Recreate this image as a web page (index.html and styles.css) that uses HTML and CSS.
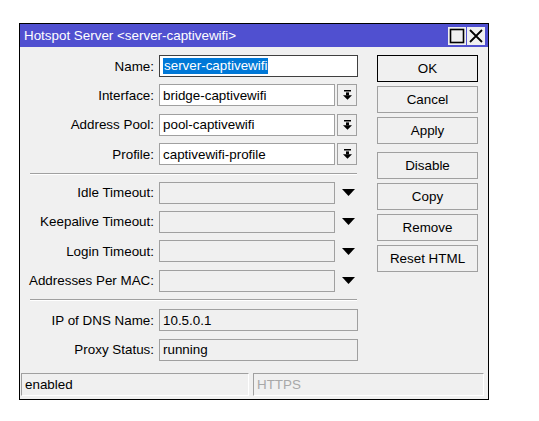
FILE: index.html
```html
<!DOCTYPE html>
<html>
<head>
<meta charset="utf-8">
<link rel="stylesheet" href="styles.css">
</head>
<body>
<div class="window">
  <div class="titlebar">
    <span class="title">Hotspot Server &lt;server-captivewifi&gt;</span>
    <div class="tb-buttons">
      <span class="tb-btn"><svg width="16" height="16" viewBox="0 0 16 16"><rect x="1.5" y="1.5" width="13" height="13" fill="none" stroke="#000" stroke-width="1.6"/></svg></span>
      <span class="tb-btn"><svg width="16" height="16" viewBox="0 0 16 16"><path d="M2 2 L14 14 M14 2 L2 14" stroke="#000" stroke-width="1.8"/></svg></span>
    </div>
  </div>
  <div class="content">
    <div class="form">
      <div class="row">
        <label class="lbl">Name:</label>
        <div class="field wide focus"><span class="sel">server-captivewifi</span></div>
      </div>
      <div class="row">
        <label class="lbl">Interface:</label>
        <div class="field">bridge-captivewifi</div>
        <span class="ddbtn"><svg width="9" height="10" viewBox="0 0 9 10"><rect x="1" y="0" width="7" height="1.5" fill="#000"/><rect x="3" y="2.4" width="3" height="3" fill="#000"/><polygon points="0,5.2 9,5.2 4.5,9.8" fill="#000"/></svg></span>
      </div>
      <div class="row">
        <label class="lbl">Address Pool:</label>
        <div class="field">pool-captivewifi</div>
        <span class="ddbtn"><svg width="9" height="10" viewBox="0 0 9 10"><rect x="1" y="0" width="7" height="1.5" fill="#000"/><rect x="3" y="2.4" width="3" height="3" fill="#000"/><polygon points="0,5.2 9,5.2 4.5,9.8" fill="#000"/></svg></span>
      </div>
      <div class="row">
        <label class="lbl">Profile:</label>
        <div class="field">captivewifi-profile</div>
        <span class="ddbtn"><svg width="9" height="10" viewBox="0 0 9 10"><rect x="1" y="0" width="7" height="1.5" fill="#000"/><rect x="3" y="2.4" width="3" height="3" fill="#000"/><polygon points="0,5.2 9,5.2 4.5,9.8" fill="#000"/></svg></span>
      </div>
      <div class="sep first"></div>
      <div class="row">
        <label class="lbl">Idle Timeout:</label>
        <div class="field disabled"></div>
        <span class="tri"><svg width="13" height="7" viewBox="0 0 13 7"><polygon points="0,0 13,0 6.5,7" fill="#000"/></svg></span>
      </div>
      <div class="row">
        <label class="lbl">Keepalive Timeout:</label>
        <div class="field disabled"></div>
        <span class="tri"><svg width="13" height="7" viewBox="0 0 13 7"><polygon points="0,0 13,0 6.5,7" fill="#000"/></svg></span>
      </div>
      <div class="row">
        <label class="lbl">Login Timeout:</label>
        <div class="field disabled"></div>
        <span class="tri"><svg width="13" height="7" viewBox="0 0 13 7"><polygon points="0,0 13,0 6.5,7" fill="#000"/></svg></span>
      </div>
      <div class="row">
        <label class="lbl">Addresses Per MAC:</label>
        <div class="field disabled"></div>
        <span class="tri"><svg width="13" height="7" viewBox="0 0 13 7"><polygon points="0,0 13,0 6.5,7" fill="#000"/></svg></span>
      </div>
      <div class="sep"></div>
      <div class="row">
        <label class="lbl">IP of DNS Name:</label>
        <div class="field wide ro">10.5.0.1</div>
      </div>
      <div class="row">
        <label class="lbl">Proxy Status:</label>
        <div class="field wide ro">running</div>
      </div>
    </div>
    <div class="buttons">
      <div class="btn default">OK</div>
      <div class="btn">Cancel</div>
      <div class="btn">Apply</div>
      <div class="btn gap">Disable</div>
      <div class="btn">Copy</div>
      <div class="btn">Remove</div>
      <div class="btn">Reset HTML</div>
    </div>
  </div>
  <div class="statusbar">
    <div class="status s1">enabled</div>
    <div class="status s2">HTTPS</div>
  </div>
</div>
</body>
</html>
```

FILE: styles.css
```css
html, body {
  margin: 0;
  padding: 0;
  background: #ffffff;
}
body {
  font-family: "Liberation Sans", Arial, sans-serif;
  font-size: 13.4px;
  color: #000;
}
.window {
  margin-left: 19px;
  margin-top: 23px;
  width: 468px;
  height: 375px;
  border: 1px solid #000;
  background: #f0f0f0;
  display: flex;
  flex-direction: column;
}
.titlebar {
  height: 23px;
  background: #5050d0;
  display: flex;
  align-items: center;
  justify-content: space-between;
  padding-left: 4px;
  padding-right: 3px;
}
.title {
  color: #fff;
}
.tb-buttons {
  display: flex;
  gap: 1px;
}
.tb-btn {
  width: 18px;
  height: 18px;
  background: #f0f0f0;
  display: flex;
  align-items: center;
  justify-content: center;
}
.content {
  display: flex;
  padding-top: 8px;
  flex: 1;
}
.form {
  display: flex;
  flex-direction: column;
  width: 337px;
}
.row {
  display: flex;
  align-items: center;
  height: 22px;
  margin-bottom: 7.4px;
}
.lbl {
  flex: none;
  width: 134px;
  text-align: right;
  white-space: nowrap;
  margin-right: 5px;
}
.field {
  flex: none;
  width: 171px;
  height: 20px;
  border: 1px solid #a0a0a0;
  background: #fff;
  padding-left: 3px;
  box-sizing: content-box;
  display: flex;
  align-items: center;
  white-space: nowrap;
}
.field.wide {
  width: 194px;
}
.field.focus {
  border-color: #404040;
}
.sel {
  background: #0078d7;
  color: #fff;
  padding: 0 1px;
  line-height: 16px;
}
.field.disabled {
  background: #f0f0f0;
}
.field.ro {
  background: #f0f0f0;
}
.ddbtn {
  flex: none;
  margin-left: 2px;
  width: 18px;
  height: 20px;
  border: 1px solid #a0a0a0;
  display: flex;
  align-items: center;
  justify-content: center;
  background: #f0f0f0;
}
.tri {
  flex: none;
  margin-left: 7px;
  width: 13px;
  height: 7px;
  display: flex;
}
.sep {
  margin-left: 10px;
  width: 327px;
  height: 1px;
  background: #a0a0a0;
  border-bottom: 1px solid #fff;
  margin-bottom: 8px;
}
.sep.first {
  margin-bottom: 7px;
}
.buttons {
  display: flex;
  flex-direction: column;
  margin-left: 20px;
  gap: 4px;
}
.btn {
  width: 99px;
  height: 25px;
  border: 1px solid #a0a0a0;
  display: flex;
  align-items: center;
  justify-content: center;
  white-space: nowrap;
}
.btn.default {
  border-color: #000;
}
.btn.gap {
  margin-top: 4px;
}
.statusbar {
  display: flex;
  gap: 4px;
  padding: 0 0 3px 1px;
}
.status {
  height: 23px;
  border-top: 1px solid #a0a0a0;
  border-left: 1px solid #a0a0a0;
  border-bottom: 1px solid #fff;
  border-right: 1px solid #fff;
  display: flex;
  align-items: center;
  padding-left: 3px;
  box-sizing: border-box;
}
.s1 {
  width: 228px;
}
.s2 {
  width: 231px;
  color: #a8a8a8;
}
```
